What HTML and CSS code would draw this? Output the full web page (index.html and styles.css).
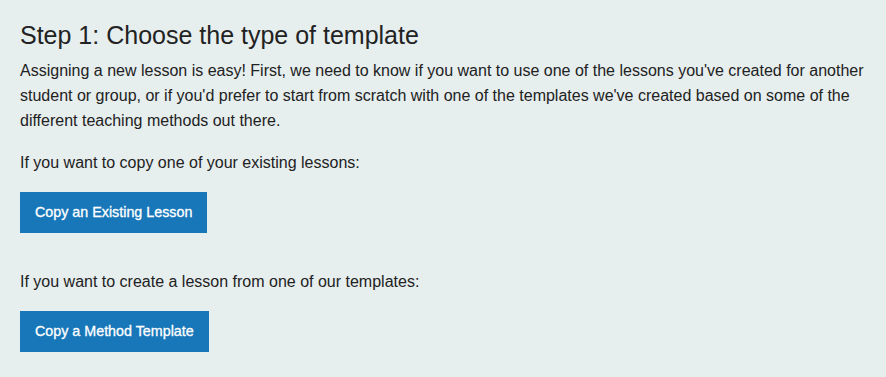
FILE: index.html
```html
<!DOCTYPE html>
<html lang="en">
<head>
    <meta charset="UTF-8">
    <meta name="viewport" content="width=device-width, initial-scale=1.0">
    <title>Assign a Lesson</title>
    <link rel="stylesheet" href="styles.css">
</head>
<body>
    <div class="container">
        <h1>Step 1: Choose the type of template</h1>
        <p class="intro">Assigning a new lesson is easy! First, we need to know if you want to use one of the lessons you've created for another student or group, or if you'd prefer to start from scratch with one of the templates we've created based on some of the different teaching methods out there.</p>

        <div class="choice">
            <p>If you want to copy one of your existing lessons:</p>
            <button class="btn">Copy an Existing Lesson</button>
        </div>

        <div class="choice">
            <p>If you want to create a lesson from one of our templates:</p>
            <button class="btn">Copy a Method Template</button>
        </div>
    </div>
</body>
</html>
```

FILE: styles.css
```css
body {
    font-family: "Liberation Sans", Arial, sans-serif;
    margin: 0;
    background-color: #e6eeee;
    color: #222;
}

.container {
    padding: 20px 20px 0 20px;
}

h1 {
    font-size: 25px;
    font-weight: normal;
    margin: 0 0 8px 0;
    line-height: 30px;
}

p {
    font-size: 16px;
    line-height: 25px;
    margin: 0;
}

.intro {
    margin-bottom: 17px;
}

.choice {
    margin-bottom: 36px;
}

.choice p {
    margin-bottom: 17px;
}

.btn {
    font-family: "Liberation Sans", Arial, sans-serif;
    font-size: 14.3px;
    font-weight: normal;
    -webkit-text-stroke: 0.3px #fff;
    padding: 12px 15px;
    line-height: 17px;
    border: none;
    border-radius: 0;
    background-color: #1877b9;
    color: #fff;
    cursor: pointer;
}

.btn:hover {
    background-color: #125f95;
}
```
